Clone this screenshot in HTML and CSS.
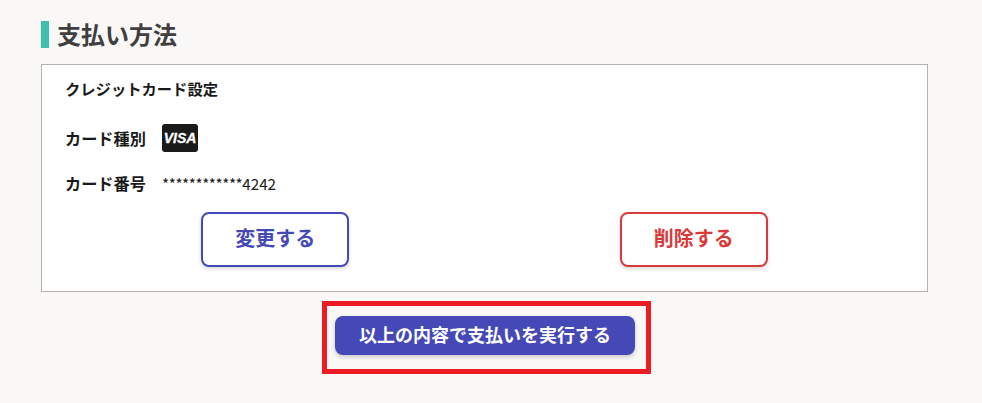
FILE: index.html
```html
<!DOCTYPE html>
<html lang="ja">
<head>
    <meta charset="UTF-8">
    <title>支払い方法</title>
    <link rel="stylesheet" href="styles.css">
</head>
<body>
    <div class="container">
        <h2 class="section-title">支払い方法</h2>
        <div class="card-box">
            <div class="box-title">クレジットカード設定</div>
            <div class="card-row card-type">
                <span class="card-label">カード種別</span>
                <span class="visa"><span class="visa-text">VISA</span></span>
            </div>
            <div class="card-row card-number">
                <span class="card-label">カード番号</span>
                <span class="number"><span class="mask">************</span>4242</span>
            </div>
            <div class="card-buttons">
                <button class="btn btn-change">変更する</button>
                <button class="btn btn-delete">削除する</button>
            </div>
        </div>
        <div class="submit-area">
            <button class="btn-submit">以上の内容で支払いを実行する</button>
        </div>
    </div>
</body>
</html>
```

FILE: styles.css
```css
body, html {
    margin: 0;
    padding: 0;
    background-color: #faf8f6;
    font-family: "Noto Sans CJK JP", "Noto Sans", sans-serif;
    color: #1a1a1a;
}
.container {
    width: 887px;
    margin-left: 41px;
    padding: 21px 0 29px;
}
.section-title {
    margin: 0 0 16px;
    height: 27px;
    padding-left: 8px;
    border-left: 8px solid #3dbfae;
    font-size: 24px;
    line-height: 25px;
    font-weight: 700;
    color: #3f3f3f;
}
.card-box {
    box-sizing: border-box;
    height: 228px;
    padding: 11px 24px 0 23px;
    background: #fff;
    border: 1px solid #b5b1ae;
}
.box-title {
    font-size: 15.3px;
    line-height: 24px;
    font-weight: 700;
}
.card-row {
    display: flex;
    align-items: center;
}
.card-type {
    margin-top: 24px;
}
.card-number {
    margin-top: 17px;
}
.card-label {
    width: 97px;
    font-size: 16.2px;
    font-weight: 700;
    line-height: 28px;
}
.visa {
    display: flex;
    align-items: center;
    justify-content: center;
    width: 36px;
    height: 28px;
    border-radius: 3px;
    background: #1a1a1a;
}
.visa-text {
    font-family: "Liberation Sans", sans-serif;
    font-size: 14px;
    font-weight: 700;
    font-style: italic;
    color: #fff;
    -webkit-text-stroke: 0.3px #fff;
}
.number {
    font-size: 15.2px;
    line-height: 28px;
}
.mask {
    letter-spacing: -0.4px;
}
.card-buttons {
    display: flex;
    justify-content: space-around;
    margin-top: 15px;
    padding-left: 1px;
}
.btn {
    box-sizing: border-box;
    width: 148px;
    height: 55px;
    padding: 0 0 4px;
    background: #fff;
    border: 2px solid;
    border-radius: 8px;
    box-shadow: 0 2px 4px rgba(0,0,0,0.15);
    font-family: inherit;
    font-size: 20px;
    font-weight: 700;
}
.btn-change {
    border-color: #4549b8;
    color: #4549b8;
}
.btn-delete {
    border-color: #d93a3a;
    color: #d93a3a;
}
/* red marker round the button */
.submit-area {
    box-sizing: border-box;
    width: 329px;
    height: 73px;
    margin: 9px 0 0 281px;
    padding: 10px 11px 14px 8px;
    border: 5px solid #ed1c24;
}
.btn-submit {
    display: block;
    width: 300px;
    height: 39px;
    padding: 0 0 3px;
    background: #4549b8;
    border: none;
    border-radius: 8px;
    box-shadow: 0 2px 4px rgba(0,0,0,0.2);
    font-family: inherit;
    font-size: 18px;
    font-weight: 700;
    color: #fff;
}
```
